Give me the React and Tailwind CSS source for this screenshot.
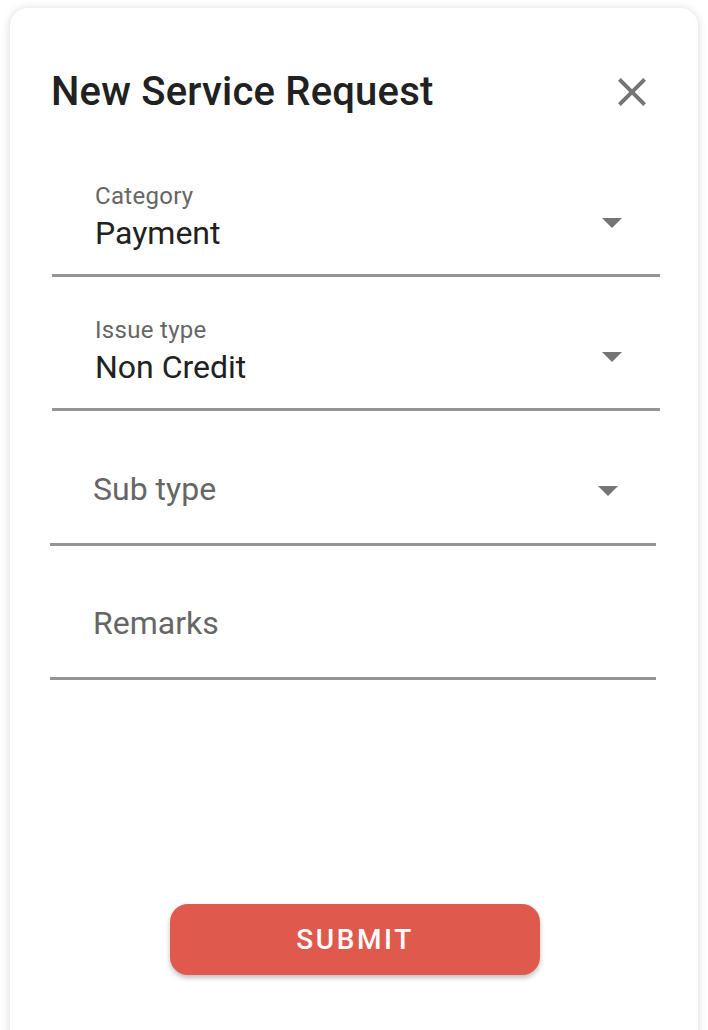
import React from 'react';

const ArrowDrop = ({ className = '' }) => (
  <svg viewBox="0 0 24 24" className={`w-[48px] h-[48px] shrink-0 fill-[#757575] ${className}`}>
    <path d="M7 10l5 5 5-5z" />
  </svg>
);

const CloseIcon = () => (
  <svg viewBox="0 0 24 24" className="w-[48px] h-[48px] fill-[#757575]">
    <path d="M19 6.41L17.59 5 12 10.59 6.41 5 5 6.41 10.59 12 5 17.59 6.41 19 12 13.41 17.59 19 19 17.59 13.41 12z" />
  </svg>
);

const SelectField = ({ label, value, className = '' }) => (
  <div className={`h-[134px] border-b-[3px] border-[#949494] flex items-end ${className}`}>
    <div className="flex-1 flex items-center pl-[43px] pr-[24px] pb-[22px]">
      <div className="flex-1">
        <div className="text-[24px] leading-[28px] text-[#666666] tracking-[0.3px]">{label}</div>
        <div className="mt-[4px] text-[32px] leading-[38px] text-[#212121]">{value}</div>
      </div>
      <ArrowDrop className="mt-[10px]" />
    </div>
  </div>
);

const EmptyField = ({ placeholder, select, className = '' }) => (
  <div className={`h-[134px] border-b-[3px] border-[#949494] flex items-end ${className}`}>
    <div className="flex-1 flex items-center h-[48px] pl-[43px] pr-[24px] mb-[30px]">
      <div className="flex-1 text-[32px] leading-[38px] text-[#666666]">{placeholder}</div>
      {select && <ArrowDrop className="mt-[2px]" />}
    </div>
  </div>
);

export default function App() {
  return (
    <div
      className="h-[1030px] overflow-hidden bg-white pt-[8px] px-[10px]"
      style={{ fontFamily: 'Roboto, "Liberation Sans", sans-serif' }}
    >
      <div className="h-[1060px] bg-white rounded-[18px] shadow-[0_1px_10px_rgba(0,0,0,0.16)] pt-[60px] pl-[40px] pr-[38px] flex flex-col">
        <div className="h-[48px] flex items-center justify-between pl-[1px]">
          <h2 className="text-[40px] leading-[48px] font-medium text-[#212121] tracking-[0.2px]">
            New Service Request
          </h2>
          <button className="mr-[4px]" aria-label="Close">
            <CloseIcon />
          </button>
        </div>

        <div className="mt-[27px] flex flex-col">
          <SelectField label="Category" value="Payment" className="ml-[2px] w-[608px]" />
          <SelectField label="Issue type" value="Non Credit" className="ml-[2px] w-[608px]" />
          <EmptyField placeholder="Sub type" select className="w-[606px] h-[135px]" />
          <EmptyField placeholder="Remarks" className="w-[606px]" />
        </div>

        <div className="mt-[224px] flex justify-center">
          <button className="w-[370px] h-[71px] rounded-[18px] bg-[#E0594D] text-white text-[28px] font-medium tracking-[2.6px] shadow-[0_3px_5px_rgba(0,0,0,0.25)]">
            SUBMIT
          </button>
        </div>
      </div>
    </div>
  );
}
